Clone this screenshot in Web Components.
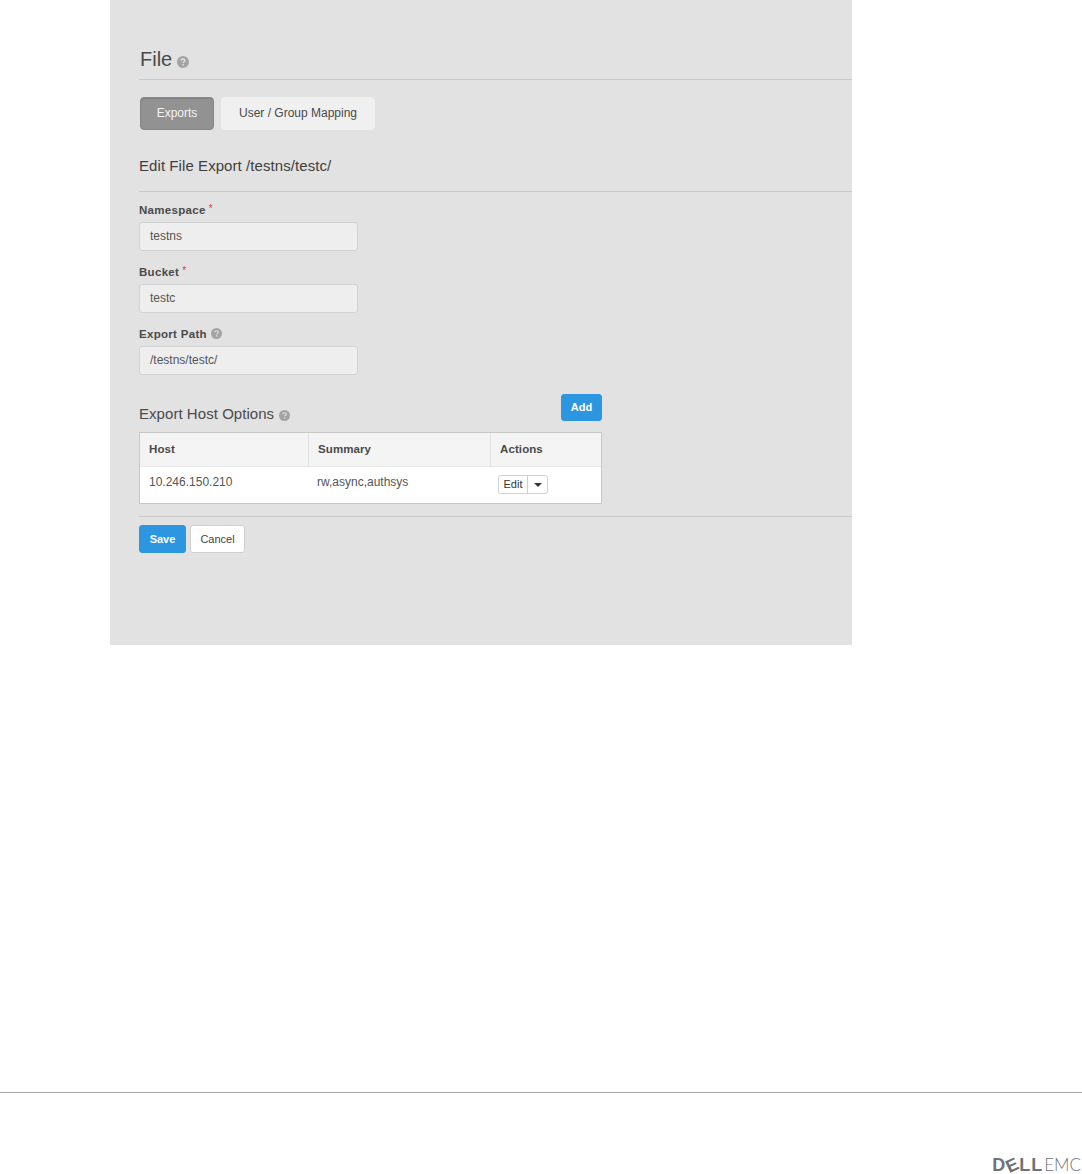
<!DOCTYPE html>
<html>
<head>
<meta charset="utf-8">
<title>File</title>
<style>
html, body { margin: 0; background: #fff; }
body { font-family: "Liberation Sans", Arial, sans-serif; color: #444; width: 1082px; height: 1174px; display: flex; flex-direction: column; }
</style>
</head>
<body>
<file-panel>
  <help-title size="20" icon="12" slot="title">File</help-title>
  <tab-bar></tab-bar>
  <edit-export></edit-export>
</file-panel>
<page-footer></page-footer>
<script>
const helpIcon = (size) => `<svg width="${size}" height="${size}" viewBox="0 0 12 12" aria-hidden="true"><circle cx="6" cy="6" r="6" fill="#a3a3a3"/><path d="M4.1 4.6C4.2 3.5 5 3 6 3c1.100 0 1.900.6 1.900 1.500 0 .8-.5 1.100-1 1.400-.5.3-.7.5-.7 1" fill="none" stroke="#e2e2e2" stroke-width="1.300"/><rect x="5.400" y="8" width="1.500" height="1.400" fill="#e2e2e2"/></svg>`;

class HelpTitle extends HTMLElement {
  connectedCallback() {
    const root = this.attachShadow({ mode: "open" });
    const size = this.getAttribute("size") || 14;
    root.innerHTML = `<style>
      :host { display: inline-flex; align-items: center; gap: 5px; font-size: ${size}px; color: #4a4a4a; }
      svg { flex: none; position: relative; top: 2px; }
    </style><slot></slot>${helpIcon(this.getAttribute("icon") || 11)}`;
  }
}

class FilePanel extends HTMLElement {
  connectedCallback() {
    const root = this.attachShadow({ mode: "open" });
    root.innerHTML = `<style>
      :host { display: block; width: 742px; height: 645px; margin-left: 110px; background: #e2e2e2; box-sizing: border-box; padding: 48px 0 0 29px; flex: none; }
      .title { height: 31px; border-bottom: 1px solid #c9c9c9; padding-left: 1px; line-height: 23px; }
    </style>
    <div class="title"><slot name="title"></slot></div>
    <slot></slot>`;
  }
}

class TabBar extends HTMLElement {
  connectedCallback() {
    const root = this.attachShadow({ mode: "open" });
    root.innerHTML = `<style>
      :host { display: flex; gap: 7px; margin: 17px 0 0 1px; font-size: 12px; }
      div { height: 33px; line-height: 33px; text-align: center; border-radius: 4px; box-sizing: border-box; }
      .on { width: 74px; background: #929292; color: #f4f4f4; border: 1px solid #858585; line-height: 31px; box-shadow: inset 0 1px 1px rgba(0,0,0,.1); }
      .off { width: 154px; background: #f0f0f0; color: #4a4a4a; }
    </style><div class="on">Exports</div><div class="off">User / Group Mapping</div>`;
  }
}

class FormField extends HTMLElement {
  connectedCallback() {
    const root = this.attachShadow({ mode: "open" });
    const extra = this.hasAttribute("required")
      ? `<span class="req">*</span>`
      : this.hasAttribute("help") ? helpIcon(11) : "";
    root.innerHTML = `<style>
      :host { display: block; margin-bottom: 13px; }
      label { display: flex; align-items: center; gap: 3px; height: 15px; font-size: 11.500px; font-weight: bold; color: #4a4a4a; letter-spacing: .3px; margin-bottom: 5px; }
      .req { color: #e0392b; font-weight: normal; font-size: 10px; position: relative; top: -1px; }
      svg { margin-left: 1px; }
      .box { width: 219px; height: 29px; box-sizing: border-box; background: #eeeeee; border: 1px solid #d2d2d2; border-radius: 3px; padding-left: 10px; font-size: 12px; line-height: 26px; color: #555; }
    </style><label><span>${this.getAttribute("label")}</span>${extra}</label><div class="box">${this.getAttribute("value")}</div>`;
  }
}

class ActionButton extends HTMLElement {
  connectedCallback() {
    const root = this.attachShadow({ mode: "open" });
    root.innerHTML = `<style>
      :host { display: inline-block; box-sizing: border-box; height: 28px; line-height: 26px; text-align: center; font-size: 11px; border-radius: 3px; border: 1px solid #d0d0d0; background: #fff; color: #444; }
      :host([primary]) { background: #2d96e0; border-color: #2d96e0; color: #fff; font-weight: bold; }
    </style><slot></slot>`;
  }
}

class HostTable extends HTMLElement {
  connectedCallback() {
    const root = this.attachShadow({ mode: "open" });
    root.innerHTML = `<style>
      :host { display: block; width: 463px; box-sizing: border-box; border: 1px solid #c8c8c8; background: #fff; font-size: 12px; color: #555; }
      .row { display: grid; grid-template-columns: 168px 182px 1fr; }
      .head { height: 33px; background: #f4f4f4; border-bottom: 1px solid #e8e8e8; font-size: 11.500px; font-weight: bold; line-height: 32px; color: #4a4a4a; letter-spacing: .1px; }
      .head > div + div { border-left: 1px solid #e2e2e2; }
      .head > div { padding-left: 9px; }
      .body { height: 36px; line-height: 31px; }
      .body > div { padding-left: 9px; }
      .split { display: flex; width: 50px; height: 19px; margin-top: 8px; box-sizing: border-box; border: 1px solid #d0d0d0; border-radius: 3px; color: #333; font-size: 11px; line-height: 17px; }
      .split span { width: 28px; text-align: center; border-right: 1px solid #d0d0d0; }
      .split i { flex: 1; display: flex; align-items: center; justify-content: center; }
      .split i::after { content: ""; border: 4px solid transparent; border-top-color: #333; border-bottom: 0; }
      .body > div:nth-child(3) { padding-left: 8px; }
    </style>
    <div class="row head"><div>Host</div><div>Summary</div><div>Actions</div></div>
    <div class="row body"><div>10.246.150.210</div><div>rw,async,authsys</div><div><div class="split"><span>Edit</span><i></i></div></div></div>`;
  }
}

class EditExport extends HTMLElement {
  connectedCallback() {
    const root = this.attachShadow({ mode: "open" });
    root.innerHTML = `<style>
      :host { display: block; }
      h2 { margin: 27px 0 0; height: 34px; border-bottom: 1px solid #c9c9c9; font-size: 15px; font-weight: normal; line-height: 18px; color: #3f3f3f; letter-spacing: .07px; }
      .fields { padding-top: 10px; }
      .hosthead { display: flex; justify-content: space-between; width: 463px; height: 38px; margin-top: 19px; }
      .hosthead help-title { align-self: flex-end; height: 18px; margin-bottom: 10px; letter-spacing: .05px; }
      .add { width: 41px; height: 27px; line-height: 25px; }
      .rule { border-top: 1px solid #c9c9c9; margin: 12px 0 8px; }
      .actions { display: flex; gap: 4px; }
      .save { width: 47px; } .cancel { width: 55px; }
    </style>
    <h2>Edit File Export /testns/testc/</h2>
    <div class="fields">
      <form-field label="Namespace" value="testns" required></form-field>
      <form-field label="Bucket" value="testc" required></form-field>
      <form-field label="Export Path" value="/testns/testc/" help></form-field>
    </div>
    <div class="hosthead">
      <help-title size="15" icon="11">Export Host Options</help-title>
      <action-button primary class="add">Add</action-button>
    </div>
    <host-table></host-table>
    <div class="rule"></div>
    <div class="actions">
      <action-button primary class="save">Save</action-button>
      <action-button class="cancel">Cancel</action-button>
    </div>`;
  }
}

class PageFooter extends HTMLElement {
  connectedCallback() {
    const root = this.attachShadow({ mode: "open" });
    root.innerHTML = `<style>
      :host { display: block; flex: 1; margin-top: 447px; border-top: 1px solid #a8a8a8; }
      .logo { display: flex; justify-content: flex-end; align-items: center; height: 14px; margin-top: 65px; padding-right: 1px; font-size: 17px; line-height: 14px; color: #6f7275; white-space: nowrap; }
      b { font-size: 18px; font-weight: bold; letter-spacing: 1px; display: inline-flex; }
      b span { display: inline-block; transform: rotate(-25deg); }
      .emc { font-family: Lato, "Liberation Sans", sans-serif; font-weight: 300; margin-left: 1px; }
    </style>
    <div class="logo"><b>D<span>E</span>LL</b><span class="emc">EMC</span></div>`;
  }
}

customElements.define("help-title", HelpTitle);
customElements.define("file-panel", FilePanel);
customElements.define("tab-bar", TabBar);
customElements.define("form-field", FormField);
customElements.define("action-button", ActionButton);
customElements.define("host-table", HostTable);
customElements.define("edit-export", EditExport);
customElements.define("page-footer", PageFooter);
</script>
</body>
</html>
